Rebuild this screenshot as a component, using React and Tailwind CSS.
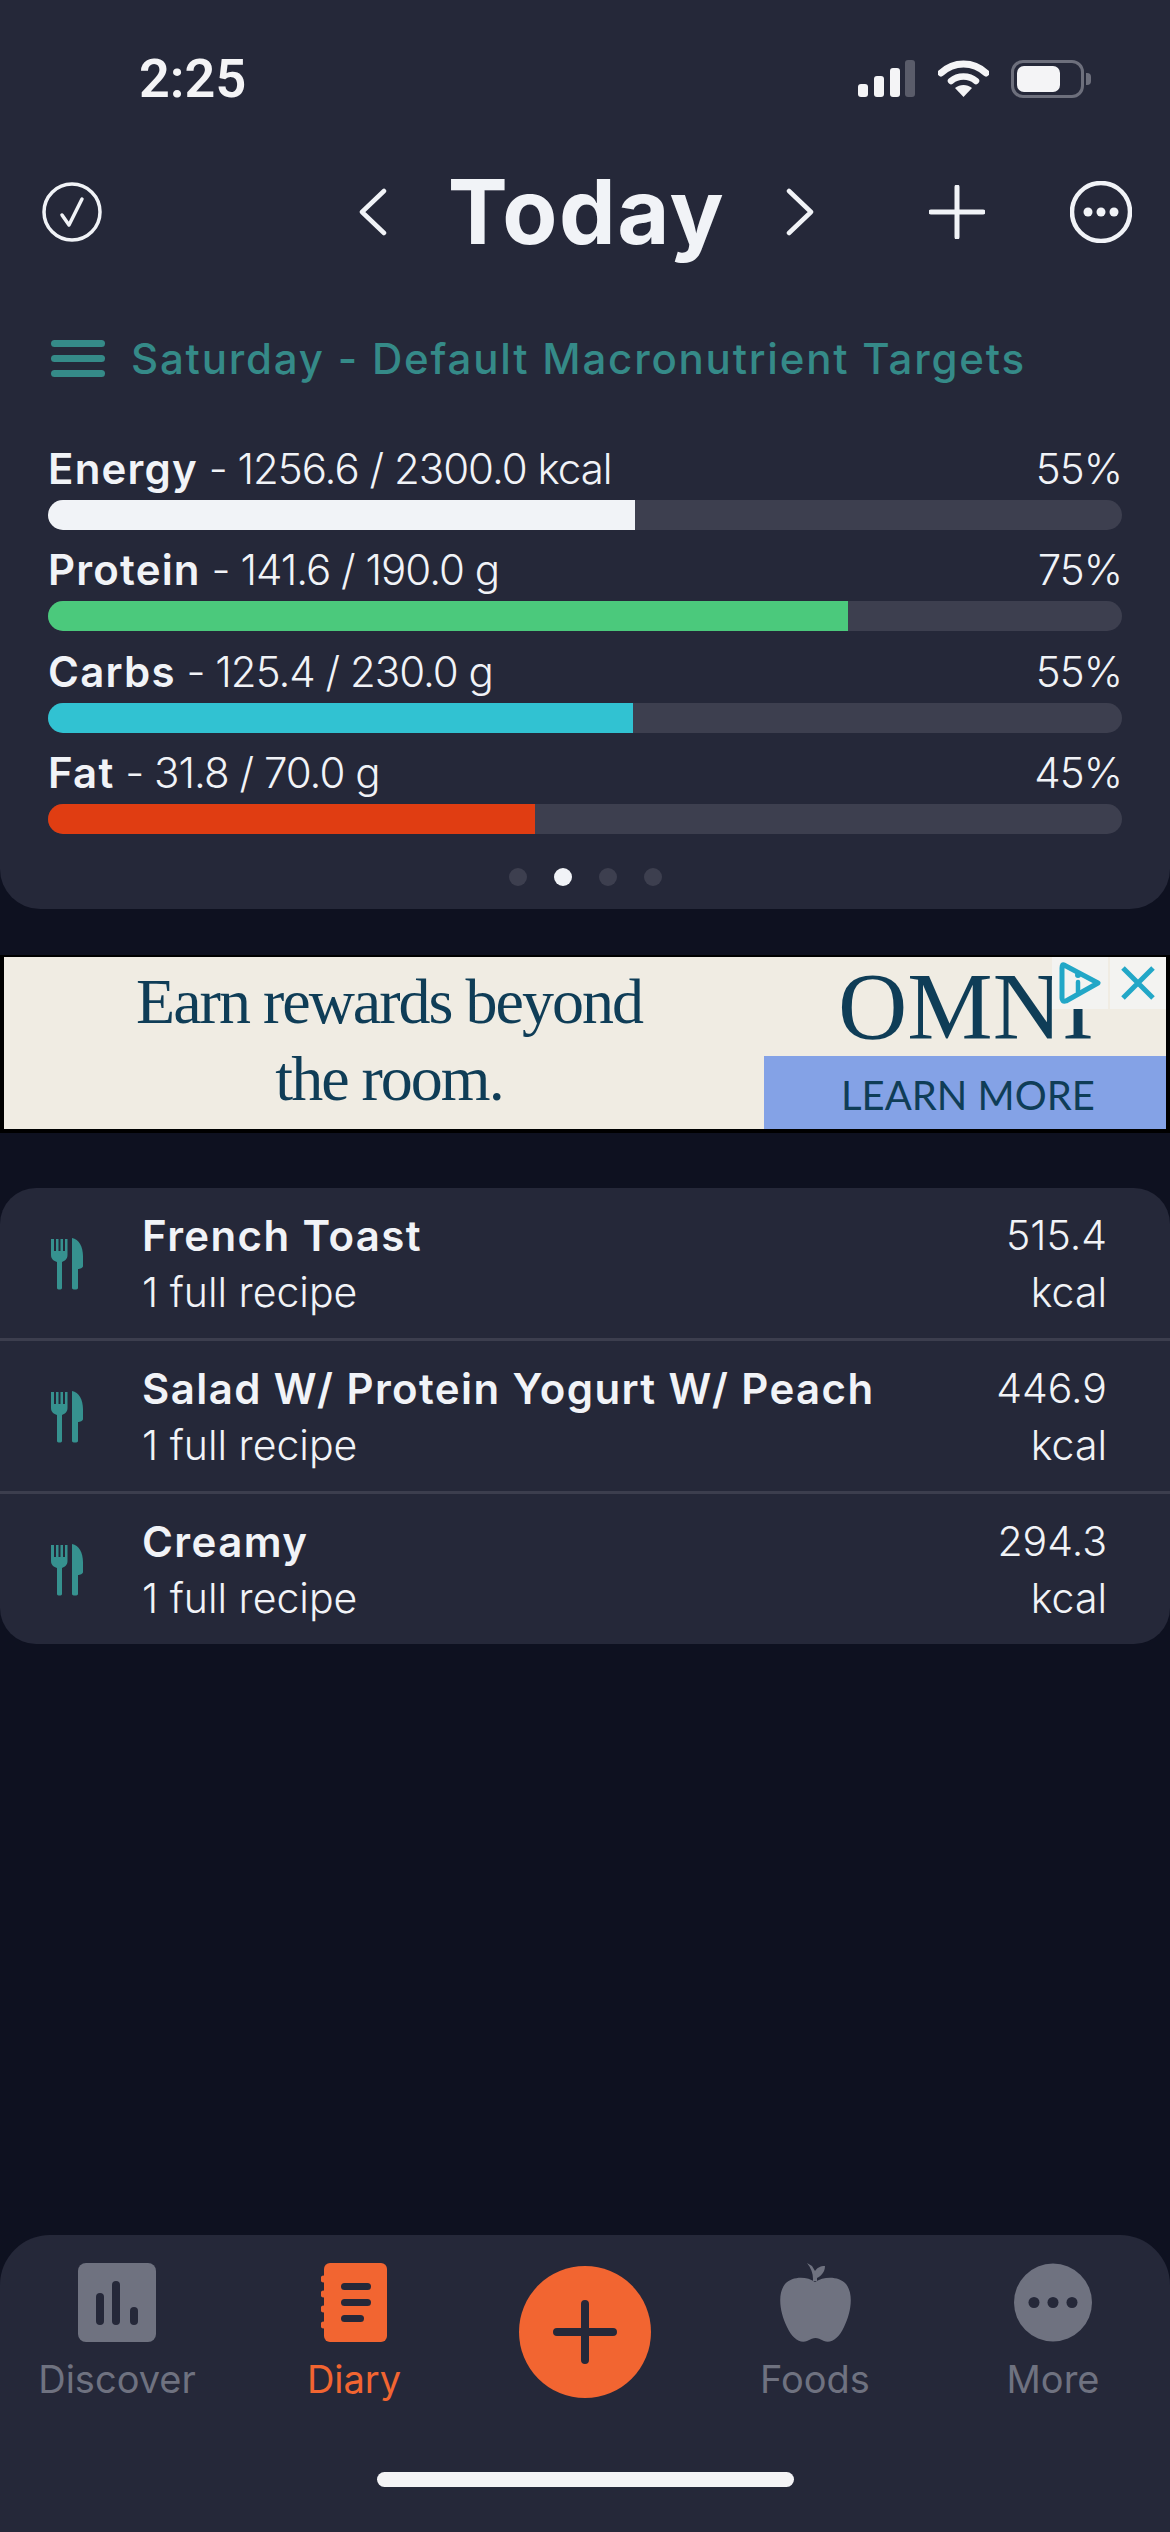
import React from "react";

const macros = [
  { name: "Energy", detail: "1256.6 / 2300.0 kcal", pct: "55%", fill: "w-[587px]", color: "bg-[#f1f3f7]" },
  { name: "Protein", detail: "141.6 / 190.0 g", pct: "75%", fill: "w-[800px]", color: "bg-[#4bc97c]" },
  { name: "Carbs", detail: "125.4 / 230.0 g", pct: "55%", fill: "w-[585px]", color: "bg-[#31c2d2]" },
  { name: "Fat", detail: "31.8 / 70.0 g", pct: "45%", fill: "w-[487px]", color: "bg-[#e03d12]" },
];

const foods = [
  { name: "French Toast", kcal: "515.4" },
  { name: "Salad W/ Protein Yogurt W/ Peach", kcal: "446.9" },
  { name: "Creamy", kcal: "294.3" },
];

const StatusIcons = () => (
  <div className="flex items-center">
    <svg width="57" height="37" viewBox="0 0 57 37">
      <rect x="0" y="24" width="10" height="13" rx="3" fill="#f4f4f6" />
      <rect x="16" y="16" width="10" height="21" rx="3" fill="#f4f4f6" />
      <rect x="32" y="8" width="10" height="29" rx="3" fill="#f4f4f6" />
      <rect x="47" y="0" width="10" height="37" rx="3" fill="#5a5c6a" />
    </svg>
    <svg className="ml-[23px]" width="51" height="37" viewBox="0 0 51 37" fill="none">
      <path d="M3 13 C16 1 35 1 48 13" stroke="#f4f4f6" strokeWidth="7" strokeLinecap="round" />
      <path d="M13 21 C20 15 31 15 38 21" stroke="#f4f4f6" strokeWidth="6.5" strokeLinecap="round" />
      <path d="M17 28 L25.5 37 L34 28 C29 24 22 24 17 28 Z" fill="#f4f4f6" />
    </svg>
    <div className="ml-[22px] flex items-center">
      <div className="w-[73px] h-[38px] rounded-[12px] border-[3px] border-[#6d6f7c] p-[3px] box-border">
        <div className="w-[43px] h-full rounded-[7px] bg-[#f4f4f6]" />
      </div>
      <div className="ml-[2px] w-[5px] h-[12px] rounded-r-[4px] bg-[#6d6f7c]" />
    </div>
  </div>
);

const Header = () => (
  <div className="h-[90px] mt-[62px] pl-[42px] flex items-center text-[#f1f3f7]">
    <svg width="60" height="60" viewBox="0 0 60 60" fill="none" stroke="currentColor">
      <circle cx="30" cy="30" r="28" strokeWidth="3.5" />
      <path d="M20 33 L27 43 L40 17" strokeWidth="3.5" strokeLinecap="round" strokeLinejoin="round" />
    </svg>
    <svg className="ml-[257px]" width="28" height="48" viewBox="0 0 28 48" fill="none" stroke="currentColor">
      <path d="M25 3 L3 24 L25 45" strokeWidth="4.5" strokeLinecap="round" strokeLinejoin="round" />
    </svg>
    <div className="w-[399px] text-center text-[90px] leading-[90px] font-bold tracking-[1.5px]">Today</div>
    <svg width="28" height="48" viewBox="0 0 28 48" fill="none" stroke="currentColor">
      <path d="M3 3 L25 24 L3 45" strokeWidth="4.5" strokeLinecap="round" strokeLinejoin="round" />
    </svg>
    <svg className="ml-[115px]" width="56" height="54" viewBox="0 0 56 54" fill="none" stroke="currentColor">
      <path d="M28 2 V52 M2 27 H54" strokeWidth="5" strokeLinecap="round" />
    </svg>
    <svg className="ml-[85px]" width="62" height="62" viewBox="0 0 62 62" fill="none">
      <circle cx="31" cy="31" r="29" stroke="currentColor" strokeWidth="4.5" />
      <circle cx="18" cy="31" r="4.5" fill="currentColor" />
      <circle cx="31" cy="31" r="4.5" fill="currentColor" />
      <circle cx="44" cy="31" r="4.5" fill="currentColor" />
    </svg>
  </div>
);

const MacroRow = ({ name, detail, pct, fill, color }) => (
  <div className="h-[101.4px]">
    <div className="h-[50px] flex items-center justify-between text-[42px] leading-[50px] text-[#f1f3f7]">
      <div>
        <span className="font-semibold tracking-[1.2px]">{name}</span>
        <span className="font-light tracking-[-1px]"> - {detail}</span>
      </div>
      <span className="font-light tracking-[-1px]">{pct}</span>
    </div>
    <div className="mt-[6px] h-[30px] rounded-[15px] bg-[#3d3f4f] overflow-hidden">
      <div className={`h-full ${fill} ${color}`} />
    </div>
  </div>
);

const ForkKnife = () => (
  <svg width="32" height="52" viewBox="0 0 32 52" fill="#36918f">
    <path d="M0 1 H3 V13 H5 V1 H7.5 V13 H9.5 V1 H12 V13 H14 V1 H16.5 V17 C16.5 21 13.5 23 11 24 V50 C11 52 6 52 6 50 V24 C3 23 0 21 0 17 Z" />
    <path d="M21 0 C28 1 32 9 32 18 V28 C32 30 29 31 27 31 V50 C27 52 21 52 21 50 Z" />
  </svg>
);

const FoodRow = ({ name, kcal }) => (
  <div className="h-[150px] pl-[51px] pr-[63px] pt-[2px] flex items-center text-[#f1f3f7]">
    <ForkKnife />
    <div className="ml-[59px] flex-1 flex flex-col">
      <span className="h-[57px] text-[42px] leading-[57px] font-semibold tracking-[1.4px]">{name}</span>
      <span className="h-[57px] text-[41px] leading-[57px] font-light">1 full recipe</span>
    </div>
    <div className="flex flex-col items-end text-[41px] font-light">
      <span className="h-[57px] leading-[57px]">{kcal}</span>
      <span className="h-[57px] leading-[57px]">kcal</span>
    </div>
  </div>
);

const Ad = () => (
  <div className="mt-[46px] h-[178px] bg-black px-[4px] pt-[2px] pb-[4px]">
    <div className="relative h-full bg-[#f0ece3] flex text-[#0f3d57]">
      <div className="w-[760px] flex flex-col items-center pt-[6px] pl-[10px] font-[family-name:'Liberation_Serif'] text-[64px] leading-[77px] tracking-[-2px]">
        <span>Earn rewards beyond</span>
        <span>the room.</span>
      </div>
      <div className="flex-1 flex flex-col">
        <div className="h-[99px] flex items-center pl-[74px] font-[family-name:'Liberation_Serif'] text-[96px] leading-none">OMNI</div>
        <div className="flex-1 bg-[#84a2e6] flex items-center justify-center font-[family-name:Lato] text-[40px] pl-[6px] pt-[4px]">LEARN MORE</div>
      </div>
      <div className="absolute top-0 right-0 flex gap-[2px]">
        <div className="w-[56px] h-[52px] bg-[#f3f3f1] flex items-center justify-center">
          <svg width="44" height="44" viewBox="0 0 44 44" fill="none" stroke="#22a7c7">
            <path d="M6 4 L40 22 L8 40 C5 41 4 39 4 37 V7 C4 4 5 3 6 4 Z" strokeWidth="5" strokeLinejoin="round" />
            <path d="M20 21 V31" strokeWidth="4.5" strokeLinecap="round" />
            <circle cx="20" cy="14" r="1.5" strokeWidth="3" />
          </svg>
        </div>
        <div className="w-[56px] h-[52px] bg-[#f3f3f1] flex items-center justify-center">
          <svg width="36" height="36" viewBox="0 0 36 36" fill="none" stroke="#22a7c7">
            <path d="M3 3 L33 33 M33 3 L3 33" strokeWidth="5" />
          </svg>
        </div>
      </div>
    </div>
  </div>
);

const NavItem = ({ label, active, shift, children }) => (
  <div className={`flex flex-col items-center ${shift || ""}`}>
    <div className="h-[79px] flex items-center justify-center">{children}</div>
    <span className={`mt-[10px] text-[38px] leading-[54px] font-normal ${active ? "text-[#f26531]" : "text-[#6f7280]"}`}>{label}</span>
  </div>
);

const BottomNav = () => (
  <div className="mt-auto h-[297px] rounded-t-[50px] bg-[#252839]">
    <div className="grid grid-cols-5 pt-[28px]">
      <NavItem label="Discover">
        <svg width="78" height="79" viewBox="0 0 78 79">
          <rect width="78" height="79" rx="8" fill="#6f7280" />
          <rect x="18" y="30" width="8" height="32" rx="4" fill="#252839" />
          <rect x="34" y="18" width="8" height="44" rx="4" fill="#252839" />
          <rect x="52" y="44" width="8" height="18" rx="4" fill="#252839" />
        </svg>
      </NavItem>
      <NavItem label="Diary" active shift="translate-x-[3px]">
        <svg width="66" height="79" viewBox="0 0 66 79" fill="#f26531">
          <rect x="3" y="0" width="63" height="79" rx="6" />
          <circle cx="3" cy="16" r="3.5" />
          <circle cx="3" cy="31" r="3.5" />
          <circle cx="3" cy="46" r="3.5" />
          <circle cx="3" cy="62" r="3.5" />
          <rect x="20" y="20" width="30" height="7" rx="3.5" fill="#252839" />
          <rect x="20" y="36" width="30" height="7" rx="3.5" fill="#252839" />
          <rect x="20" y="52" width="23" height="7" rx="3.5" fill="#252839" />
        </svg>
      </NavItem>
      <div className="flex justify-center pt-[3px]">
        <div className="w-[132px] h-[132px] rounded-full bg-[#f26531] flex items-center justify-center">
          <svg width="64" height="64" viewBox="0 0 64 64" fill="none" stroke="#252839">
            <path d="M32 4 V60 M4 32 H60" strokeWidth="8" strokeLinecap="round" />
          </svg>
        </div>
      </div>
      <NavItem label="Foods" shift="-translate-x-[4px]">
        <svg width="71" height="79" viewBox="0 0 71 79" fill="#6f7280">
          <path d="M35 19 C27 13 12 13 5 21 C-3 31 0 50 7 64 C12 75 20 81 27 78 C31 76 33 75 35.5 75 C38 75 40 76 44 78 C51 81 59 75 64 64 C71 50 74 31 66 21 C59 13 44 13 35 19 Z" />
          <path d="M33 16 C33 10 31 5 27 0 L32 3 C33 5 34 6 35 8 C37 5 40 3 45 3 C45 9 41 13 37 15 L37 18 L33 18 Z" />
        </svg>
      </NavItem>
      <NavItem label="More">
        <svg width="78" height="79" viewBox="0 0 78 79">
          <circle cx="39" cy="39.5" r="39" fill="#6f7280" />
          <circle cx="20" cy="39.5" r="5.5" fill="#252839" />
          <circle cx="39" cy="39.5" r="5.5" fill="#252839" />
          <circle cx="58" cy="39.5" r="5.5" fill="#252839" />
        </svg>
      </NavItem>
    </div>
    <div className="mt-[66px] mx-auto w-[417px] h-[15px] rounded-full bg-[#f4f4f6]" />
  </div>
);

const App = () => {
  return (
    <div className="w-[1170px] h-[2532px] flex flex-col bg-[#0e1120] font-[family-name:Inter] overflow-hidden">
      <div className="h-[909px] rounded-b-[40px] bg-[#252839]">
        <div className="h-[105px] pt-[52px] pl-[139px] pr-[79px] flex items-center justify-between">
          <span className="text-[54px] leading-[52px] font-semibold text-[#f4f4f6] font-[family-name:Roboto]">2:25</span>
          <StatusIcons />
        </div>
        <Header />
        <div className="mt-[74px] h-[54px] pl-[51px] flex items-center">
          <div className="w-[54px] flex flex-col gap-[8px]">
            <div className="h-[7px] rounded-full bg-[#358a88]" />
            <div className="h-[7px] rounded-full bg-[#358a88]" />
            <div className="h-[7px] rounded-full bg-[#358a88]" />
          </div>
          <span className="ml-[26px] text-[42px] font-medium tracking-[1.8px] text-[#358a88]">Saturday - Default Macronutrient Targets</span>
        </div>
        <div className="mt-[59px] pl-[48px] pr-[48px]">
          {macros.map((m) => (
            <MacroRow key={m.name} {...m} />
          ))}
        </div>
        <div className="mt-[18px] flex justify-center gap-[27px]">
          <div className="w-[18px] h-[18px] rounded-full bg-[#3d3f4f]" />
          <div className="w-[18px] h-[18px] rounded-full bg-[#f1f3f7]" />
          <div className="w-[18px] h-[18px] rounded-full bg-[#3d3f4f]" />
          <div className="w-[18px] h-[18px] rounded-full bg-[#3d3f4f]" />
        </div>
      </div>
      <Ad />
      <div className="mt-[55px] rounded-[36px] bg-[#252839] overflow-hidden">
        {foods.map((f, i) => (
          <div key={f.name} className={i > 0 ? "border-t-[3px] border-[#3c3e4e]" : ""}>
            <FoodRow {...f} />
          </div>
        ))}
      </div>
      <BottomNav />
    </div>
  );
};

export default App;
